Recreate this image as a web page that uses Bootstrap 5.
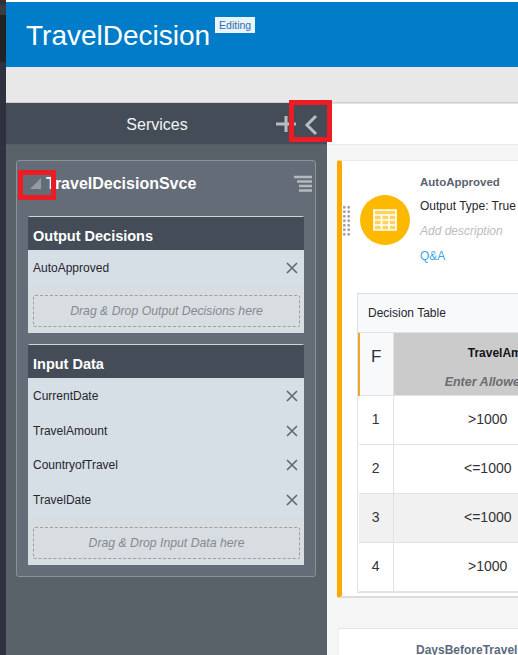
<!DOCTYPE html>
<html lang="en">
<head>
  <meta charset="UTF-8" />
  <meta name="viewport" content="width=device-width, initial-scale=1.0"/>
  <title>TravelDecision</title>
  <link href="https://cdn.jsdelivr.net/npm/bootstrap@5.3.3/dist/css/bootstrap.min.css" rel="stylesheet"/>
  <style>
    html, body { height: 655px; overflow: hidden; }
    body { font-family: "Liberation Sans", Arial, sans-serif; font-size: 12px; color: #26262e; background: #f5f5f5; }

    .page-wrap { height: 655px; width: 518px; }
    .left-strip { width: 6px; flex: none; background: #2f3140; }
    .left-strip .s1 { height: 5px; background: #333337; }
    .left-strip .s2 { height: 10px; background: #3b3c42; }
    .left-strip .s3 { height: 47px; background: #212325; }

    .page-main { width: 512px; }
    .top-line { height: 2px; background: #fff; }
    .app-header { height: 65px; background: #007cc8; padding-left: 20px; }
    .app-title { font-size: 28px; line-height: 35px; color: #fff; margin-top: 16px; }
    .edit-tag { font-size: 10.5px; line-height: 16px; height: 16px; width: 40px; text-align: center; background: #e8f3fa; color: #2c6fb0; margin: 15px 0 0 5px; }
    .grey-band { background: #e8e8e8; border-bottom: 1px solid #cfcfcf; height: 36px; }

    .work-area { height: 552px; }
    .side-panel { width: 321px; flex: none; background: #596169; position: relative; }
    .side-head { height: 42px; background: #444d57; border-bottom: 1px solid #535c65; position: relative; }
    .side-head-title { font-size: 16px; color: #f2f4f6; width: 302px; text-align: center; line-height: 43px; }
    .head-ico { position: absolute; top: 11px; }

    .svc-box { margin: 15px 11px 0 10px; height: 417px; background: #636c77; border: 1px solid #8a929a; border-radius: 3px; padding: 0 11px; }
    .svc-title-row { height: 55px; padding-left: 18px; margin-right: -8px; }
    .svc-title { font-size: 16px; font-weight: 700; color: #fff; margin-top: 14px; line-height: 18px; }
    .svc-menu { margin-top: 14px; }

    .sub-panel { background: #d6dee6; border-radius: 2px; border-top: 1px solid #cfd5db; margin-bottom: 11px; }
    .sub-head { height: 33px; background: #444d57; color: #fff; font-size: 14.5px; font-weight: 700; line-height: 18px; padding: 10px 5px 0; }
    .sub-row { height: 35px; padding: 0 6px 0 5px; font-size: 12px; color: #26262e; }
    .sub-row.row-tight { height: 34px; }
    .drop-area { margin: 0 4px 0 5px; height: 32px; border: 1px dashed #9a9fa4; border-radius: 2px; color: #85898e; font-size: 12.25px; font-style: italic; line-height: 30px; text-align: center; }
    .drop-wrap { background: #d8dde2; padding: 10px 0 6px; }

    .right-area { width: 191px; flex: none; overflow: hidden; }
    .tool-strip { height: 42px; background: #fff; border-bottom: 1px solid #ececec; border-top: 1px solid #e2e2e2; }
    .dec-card { width: 400px; height: 438px; margin: 15px 0 0 10px; background: #fff; border-left: 5px solid #ffa900; border-bottom: 2px solid #dcdcdc; border-top: 1px solid #ececec; border-radius: 2px; position: relative; }
    .grip { position: absolute; left: 0; top: 44px; width: 8px; height: 32px; background-image: radial-gradient(circle, #9a9a9a 1.2px, transparent 1.4px); background-size: 4.5px 4.5px; }
    .dec-top { padding: 10px 0 0 18px; height: 132px; }
    .round-ico { width: 50px; height: 50px; background: #fdb900; border-radius: 50%; margin-top: 24px; flex: none; }
    .dec-lines { margin-left: 10px; }
    .dec-lines > div { height: 25px; line-height: 22px; font-size: 12px; white-space: nowrap; }
    .dec-lines .dec-name { font-weight: 700; color: #5b6270; font-size: 11.5px; height: 24px; }
    .dec-add { font-style: italic; color: #bcbcbc; }
    .dec-qa { color: #3fa3e6; }

    .dec-table-wrap { margin-left: 15px; width: 226px; border: 1px solid #dde3ea; border-top-color: #d6dee6; }
    .dec-table-title { height: 39px; line-height: 38px; padding-left: 10px; background: #f8f9fb; border-bottom: 1px solid #dde3ea; font-size: 12px; }
    .dec-grid { table-layout: fixed; width: 100%; margin: 0; border-collapse: collapse; }
    .dec-grid td, .dec-grid th { padding: 0; border-bottom: 1px solid #e2e2e2; text-align: center; vertical-align: middle; }
    .col-num { width: 34px; border-right: 1px solid #e2e2e2; font-size: 12px; font-weight: 400; }
    .dec-grid .f-cell { background: #f8f9fb; border-left: 2px solid #f5a623; font-size: 17px; font-weight: 400; vertical-align: top; padding-top: 11px; color: #2d3040; height: 62px; }
    .dec-grid .head-cell { background: #cbcbcb; vertical-align: top; font-size: 12px; padding-left: 40px; white-space: nowrap; }
    .head-cell b { display: block; margin-top: 13px; line-height: 14px; color: #14141c; }
    .head-cell i { display: block; margin-top: 15px; line-height: 14px; font-size: 12.5px; font-weight: 700; color: #6c6c72; }
    .val-cell { font-size: 14px; color: #333; height: 49px; }
    .row-alt td { background: #f1f1f1; }

    .next-card { width: 400px; height: 60px; margin: 30px 0 0 11px; background: #fff; border-top: 1px solid #e5e5e5; border-left: 1px solid #eee; padding: 12px 0 0 77px; font-weight: 700; font-size: 12px; color: #5b6a7d; }

    .red-box { position: absolute; border: 5px solid #ed1c24; }
    .red-a { left: 283px; top: -3px; width: 43px; height: 42px; }
    .red-b { left: 12px; top: 67px; width: 38px; height: 30px; }
    .tri-ico { position: absolute; left: 23px; top: 74px; }
  </style>
</head>
<body>
  <div class="page-wrap d-flex">
    <div class="left-strip">
      <div class="s1"></div>
      <div class="s2"></div>
      <div class="s3"></div>
    </div>

    <div class="page-main">
      <div class="top-line"></div>
      <div class="app-header d-flex align-items-start">
        <div class="app-title">TravelDecision</div>
        <div class="edit-tag">Editing</div>
      </div>
      <div class="grey-band"></div>

      <div class="work-area d-flex">
        <!-- Services panel -->
        <div class="side-panel">
          <div class="side-head">
            <div class="side-head-title">Services</div>
            <svg class="head-ico" style="left:270px" width="20" height="20" viewBox="0 0 20 20"><path d="M10 2v16M0 10h20" stroke="#b9bdc1" stroke-width="3" fill="none"/></svg>
            <svg class="head-ico" style="left:298px" width="14" height="22" viewBox="0 0 14 22"><path d="M12 2L3 11l9 9" stroke="#b9bdc1" stroke-width="3" fill="none"/></svg>
          </div>

          <div class="svc-box">
            <div class="svc-title-row d-flex justify-content-between">
              <div class="svc-title">TravelDecisionSvce</div>
              <svg class="svc-menu" width="18" height="18" viewBox="0 0 18 18"><path d="M0 2h18M3 6.500h15M5 11h13M5 15.500h13" stroke="#b5b9bd" stroke-width="2.600" fill="none"/></svg>
            </div>

            <div class="sub-panel">
              <div class="sub-head">Output Decisions</div>
              <div class="sub-row d-flex justify-content-between align-items-center">
                <span>AutoApproved</span>
                <svg width="12" height="12" viewBox="0 0 12 12"><path d="M1 1l10 10M11 1L1 11" stroke="#636b75" stroke-width="1.700" fill="none"/></svg>
              </div>
              <div class="drop-wrap"><div class="drop-area">Drag &amp; Drop Output Decisions here</div></div>
            </div>

            <div class="sub-panel">
              <div class="sub-head">Input Data</div>
              <div class="sub-row d-flex justify-content-between align-items-center">
                <span>CurrentDate</span>
                <svg width="12" height="12" viewBox="0 0 12 12"><path d="M1 1l10 10M11 1L1 11" stroke="#636b75" stroke-width="1.700" fill="none"/></svg>
              </div>
              <div class="sub-row d-flex justify-content-between align-items-center">
                <span>TravelAmount</span>
                <svg width="12" height="12" viewBox="0 0 12 12"><path d="M1 1l10 10M11 1L1 11" stroke="#636b75" stroke-width="1.700" fill="none"/></svg>
              </div>
              <div class="sub-row row-tight d-flex justify-content-between align-items-center">
                <span>CountryofTravel</span>
                <svg width="12" height="12" viewBox="0 0 12 12"><path d="M1 1l10 10M11 1L1 11" stroke="#636b75" stroke-width="1.700" fill="none"/></svg>
              </div>
              <div class="sub-row d-flex justify-content-between align-items-center">
                <span>TravelDate</span>
                <svg width="12" height="12" viewBox="0 0 12 12"><path d="M1 1l10 10M11 1L1 11" stroke="#636b75" stroke-width="1.700" fill="none"/></svg>
              </div>
              <div class="drop-wrap"><div class="drop-area">Drag &amp; Drop Input Data here</div></div>
            </div>
          </div>

          <!-- red annotation boxes from the screenshot -->
          <div class="red-box red-a"></div>
          <svg class="tri-ico" width="13" height="13" viewBox="0 0 13 13"><path d="M12 1v11H1z" fill="#969aa0"/></svg>
          <div class="red-box red-b"></div>
        </div>

        <!-- Decision area -->
        <div class="right-area">
          <div class="tool-strip"></div>
          <div class="dec-card">
            <div class="grip"></div>
            <div class="dec-top d-flex">
              <div class="round-ico d-flex align-items-center justify-content-center">
                <svg width="24" height="22" viewBox="0 0 24 22"><path d="M1 1h22v20H1zM1 6h22M1 11h22M1 16h22M8.500 6v15M16 6v15" stroke="#fff" stroke-width="1.600" fill="#ffd35c"/></svg>
              </div>
              <div class="dec-lines">
                <div class="dec-name">AutoApproved</div>
                <div>Output Type: True</div>
                <div class="dec-add">Add description</div>
                <div class="dec-qa">Q&amp;A</div>
              </div>
            </div>
            <div class="dec-table-wrap">
              <div class="dec-table-title">Decision Table</div>
              <table class="dec-grid">
                <tr>
                  <th class="col-num f-cell">F</th>
                  <th class="head-cell"><b>TravelAmount</b><i>Enter Allowed Values</i></th>
                </tr>
                <tr><td class="col-num val-cell">1</td><td class="val-cell">&gt;1000</td></tr>
                <tr><td class="col-num val-cell">2</td><td class="val-cell">&lt;=1000</td></tr>
                <tr class="row-alt"><td class="col-num val-cell">3</td><td class="val-cell">&lt;=1000</td></tr>
                <tr><td class="col-num val-cell">4</td><td class="val-cell">&gt;1000</td></tr>
              </table>
            </div>
          </div>
          <div class="next-card">DaysBeforeTravel</div>
        </div>
      </div>
    </div>
  </div>
  <script src="https://cdn.jsdelivr.net/npm/bootstrap@5.3.3/dist/js/bootstrap.bundle.min.js"></script>
</body>
</html>
